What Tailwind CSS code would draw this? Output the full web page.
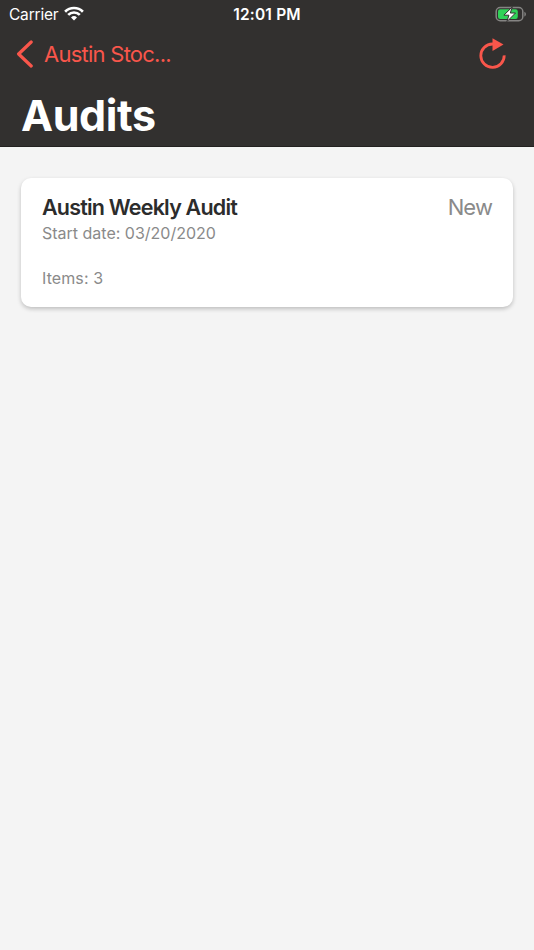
<!DOCTYPE html>
<html lang="en">
<head>
    <meta charset="UTF-8">
    <meta name="viewport" content="width=device-width, initial-scale=1.0">
    <title>Audits</title>
    <script src="https://cdn.jsdelivr.net/npm/@tailwindcss/browser@4"></script>
</head>
<body class="min-h-screen bg-[#f4f4f4] font-[Inter,sans-serif]">
    <header class="h-[147px] bg-[#32302f] border-b border-[#232120] flex flex-col">
        <!-- Status bar -->
        <div class="h-7 shrink-0 pl-[9px] pr-[7px] grid grid-cols-3 items-center text-white">
            <div class="flex items-center gap-1.5">
                <span class="pt-px text-[15.5px] leading-7 tracking-[-0.2px]">Carrier</span>
                <svg class="w-5 h-[15px] mb-0.5" viewBox="0 0 20 15" fill="none" stroke="white" stroke-width="2.7">
                    <path d="M1.1 5.7a12.6 12.6 0 0 1 17.8 0"/>
                    <path d="M4.2 8.9a8.2 8.2 0 0 1 11.6 0"/>
                    <path d="M10 14.4l-3-3a4.3 4.3 0 0 1 6 0z" fill="white" stroke="none"/>
                </svg>
            </div>
            <span class="pt-px pr-0.5 text-center text-[15.5px] leading-7 font-semibold tracking-[0.2px] whitespace-nowrap">12:01 PM</span>
            <svg class="justify-self-end w-8 h-4 mb-0.5" viewBox="0 0 32 16">
                <rect x="1.2" y="1.5" width="26.6" height="13.2" rx="4" fill="none" stroke="#858483" stroke-width="1.5"/>
                <path d="M29.4 5.7c2 .8 2 4 0 4.8z" fill="#858483"/>
                <rect x="3" y="3.3" width="19.8" height="9.6" rx="2.2" fill="#30d158"/>
                <path d="M17.3 .9L8.9 9.2h5l-2 6.4 8.6-8.6h-5.2z" fill="white" stroke="#32302f" stroke-width="1"/>
            </svg>
        </div>
        <!-- Navigation -->
        <div class="h-[52px] shrink-0 pl-4 pr-7 flex items-center justify-between text-[#f9564b]">
            <a href="#" class="flex items-center gap-[11px]">
                <svg class="w-[17px] h-7" viewBox="0 0 17 28" fill="none" stroke="currentColor" stroke-width="3.2" stroke-linecap="round" stroke-linejoin="round">
                    <path d="M15.2 2L2.6 14l12.6 12"/>
                </svg>
                <span class="text-[22px] leading-7 tracking-[-0.75px]">Austin Stoc...</span>
            </a>
            <button aria-label="Refresh">
                <svg class="w-7 h-8" viewBox="0 0 28 32" fill="none" stroke="currentColor" stroke-width="2.8">
                    <path d="M15 6h-.5A11.7 11.7 0 1 0 26.2 17.4" stroke-linecap="butt"/>
                    <path d="M14.5 .2v12.8L25.5 6.4z" fill="currentColor" stroke="none"/>
                </svg>
            </button>
        </div>
        <h1 class="pl-[21px] pt-[9px] text-[43px] leading-[52px] font-bold tracking-[-0.4px] text-white">Audits</h1>
    </header>

    <main class="px-[21px] pt-[31px]">
        <div class="h-[129px] rounded-[10px] bg-white px-[21px] pt-[15px] shadow-[0_2px_4px_rgba(0,0,0,0.22)] text-[#8a8a8a]">
            <div class="flex justify-between leading-7">
                <h2 class="text-[21.5px] font-semibold tracking-[-0.8px] text-[#2c2c2c]">Austin Weekly Audit</h2>
                <span class="text-[22px] tracking-[-0.9px]">New</span>
            </div>
            <p class="pt-px text-[16px] leading-[22px]">Start date: 03/20/2020</p>
            <p class="mt-[23px] text-[16px] leading-[22px] tracking-[0.1px]">Items: 3</p>
        </div>
    </main>
</body>
</html>
